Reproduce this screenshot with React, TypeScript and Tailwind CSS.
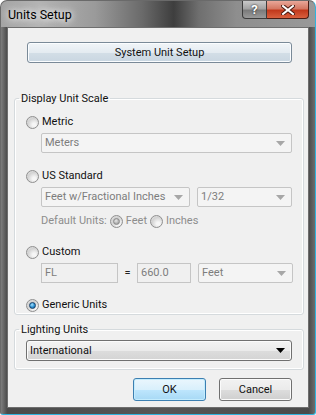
import React from "react";

function Radio({ checked, disabled }: { checked?: boolean; disabled?: boolean }) {
  return (
    <span className="flex h-[13px] w-[13px] shrink-0 items-center justify-center rounded-full border border-[#8f8f8f] bg-[radial-gradient(circle_at_65%_70%,#f6f6f6_15%,#d2d2d2_60%,#ebebeb)]">
      {checked && (
        <span
          className={
            disabled
              ? "h-[7px] w-[7px] rounded-full border border-[#8a8a8a] bg-[radial-gradient(circle_at_40%_35%,#e8e8e8,#a4a4a4_70%)]"
              : "h-[7px] w-[7px] rounded-full border border-[#17406a] bg-[radial-gradient(circle_at_40%_35%,#a6e2ff,#2a8fd0_55%,#0d4f86)]"
          }
        />
      )}
    </span>
  );
}

function Arrow({ dark }: { dark?: boolean }) {
  return (
    <svg width="9" height="5" viewBox="0 0 9 5" className="shrink-0">
      <path d="M0 0 H9 L4.5 5 Z" fill={dark ? "#000000" : "#a7a7a7"} />
    </svg>
  );
}

function Combo({ text, className }: { text: string; className: string }) {
  return (
    <div
      className={`flex h-[20px] items-center justify-between whitespace-nowrap rounded-[2px] border border-[#c5c5c5] bg-[#f4f4f4] pl-[3px] pr-[6px] text-[#7d7d7d] ${className}`}
    >
      <span>{text}</span>
      <Arrow />
    </div>
  );
}

function Field({ text, className }: { text: string; className: string }) {
  return (
    <div
      className={`flex h-[20px] items-center border border-[#c5c5c5] bg-[#f0f0f0] pl-[3px] text-[#7d7d7d] ${className}`}
    >
      {text}
    </div>
  );
}

export default function App() {
  return (
    <div className="h-[415px] w-[316px] bg-white font-['Roboto',sans-serif] text-[11px] leading-[14px] text-[#111111]">
      <div className="flex h-full w-full flex-col rounded-t-[7px] rounded-b-[3px] border border-[#6a6a6a] border-r-[#2fb4de] border-b-[#2fb4de] bg-[linear-gradient(to_right,#7d7d7d,#4a4a4a_2%,#565656_50%,#4a4a4a_98%,#6d6d6d)]">
        {/* title bar */}
        <div className="flex h-[26px] shrink-0 items-start justify-between rounded-t-[6px] bg-[linear-gradient(to_right,#a4a4a4,#b4b4b4_12%,#9a9a9a_30%,#6a6a6a_45%,#3e3e3e_55%,#6f6f6f_63%,#8e8e8e_75%,#999999)] pl-[7px] pr-[6px]">
          <span className="mt-[6px] text-[12.5px] leading-[16px] text-black [text-shadow:0_0_6px_#ffffff,0_0_10px_#ffffff]">
            Units Setup
          </span>
          <div className="flex">
            <div className="flex h-[18px] w-[25px] items-center justify-center rounded-bl-[4px] border border-t-0 border-[#3c3c3c] bg-[linear-gradient(to_bottom,#c9c9c9,#a3a3a3_45%,#7b7b7b_55%,#9a9a9a)] text-[13px] font-bold leading-[14px] text-white [text-shadow:0_0_2px_#000000]">
              ?
            </div>
            <div className="flex h-[18px] w-[42px] items-center justify-center rounded-br-[4px] border border-t-0 border-l-0 border-[#4a1d14] bg-[linear-gradient(to_bottom,#e9a799,#d47863_45%,#c2391c_55%,#d9603e)]">
              <svg width="14" height="10" viewBox="0 0 14 10">
                <path d="M2 1 L12 9 M12 1 L2 9" stroke="#4a1a10" strokeWidth="4" strokeLinecap="square" />
                <path d="M2 1 L12 9 M12 1 L2 9" stroke="#ffffff" strokeWidth="2" strokeLinecap="square" />
              </svg>
            </div>
          </div>
        </div>

        {/* client area */}
        <div className="mx-[6px] mb-[6px] flex flex-1 flex-col border border-[#6e6e6e] bg-[#f0f0f0]">
          <button className="ml-[19px] mt-[14px] h-[21px] w-[265px] rounded-[3px] border border-[#7a8a98] bg-[linear-gradient(to_bottom,#f1f5f8,#e4ebf1_50%,#d3dee7_51%,#c9d6e1)] text-[11px] text-[#111111] shadow-[inset_0_0_0_1px_#fbfdff]">
            System Unit Setup
          </button>

          <fieldset className="ml-[6px] mr-[4px] mt-[28px] rounded-[3px] border border-[#d5dadd] px-0 pb-[2px] shadow-[inset_0_0_0_1px_#ffffff]">
            <legend className="ml-[4px] h-[15px] px-[2px] leading-[15px]">Display Unit Scale</legend>

            <div className="ml-[11px] mt-[9px] flex h-[14px] items-center gap-[3px]">
              <Radio />
              <span>Metric</span>
            </div>
            <Combo text="Meters" className="ml-[26px] mt-[4px] w-[251px]" />

            <div className="ml-[11px] mt-[16px] flex h-[14px] items-center gap-[3px]">
              <Radio />
              <span>US Standard</span>
            </div>
            <div className="ml-[26px] mt-[4px] flex gap-[7px]">
              <Combo text="Feet w/Fractional Inches" className="w-[149px]" />
              <Combo text="1/32" className="w-[95px]" />
            </div>
            <div className="ml-[26px] mt-[7px] flex h-[14px] items-center text-[#8d8d8d]">
              <span>Default Units:</span>
              <span className="ml-[3px]">
                <Radio checked disabled />
              </span>
              <span className="ml-[3px]">Feet</span>
              <span className="ml-[3px]">
                <Radio />
              </span>
              <span className="ml-[3px]">Inches</span>
            </div>

            <div className="ml-[11px] mt-[17px] flex h-[14px] items-center gap-[3px]">
              <Radio />
              <span>Custom</span>
            </div>
            <div className="ml-[26px] mt-[4px] flex items-center">
              <Field text="FL" className="w-[77px]" />
              <span className="w-[19px] text-center text-[#222222]">=</span>
              <Field text="660.0" className="w-[54px]" />
              <Combo text="Feet" className="ml-[7px] w-[95px]" />
            </div>

            <div className="ml-[11px] mt-[15px] flex h-[14px] items-center gap-[3px]">
              <Radio checked />
              <span>Generic Units</span>
            </div>
          </fieldset>

          <fieldset className="ml-[6px] mr-[4px] mt-[7px] rounded-[3px] border border-[#d5dadd] px-0 pb-[8px] shadow-[inset_0_0_0_1px_#ffffff]">
            <legend className="ml-[4px] h-[15px] px-[2px] leading-[15px]">Lighting Units</legend>
            <div className="ml-[11px] mt-[3px] flex h-[21px] w-[266px] items-center justify-between rounded-[3px] border border-[#707070] bg-[linear-gradient(to_bottom,#f3f3f3,#ebebeb_50%,#dddddd_51%,#d4d4d4)] pl-[3px] pr-[6px] shadow-[inset_0_0_0_1px_#fbfbfb]">
              <span>International</span>
              <Arrow dark />
            </div>
          </fieldset>

          <div className="mr-[16px] mt-[8px] flex justify-end gap-[13px]">
            <button className="h-[23px] w-[73px] rounded-[3px] border border-[#3c7fb1] bg-[linear-gradient(to_bottom,#eaf6fd,#d9f0fc_50%,#bee6fd_51%,#a7d9f5)] text-[11px] text-[#111111] shadow-[inset_0_0_0_1px_#c4ecfd]">
              OK
            </button>
            <button className="h-[23px] w-[73px] rounded-[3px] border border-[#707070] bg-[linear-gradient(to_bottom,#f2f2f2,#ebebeb_50%,#dddddd_51%,#cfcfcf)] text-[11px] text-[#111111] shadow-[inset_0_0_0_1px_#fbfbfb]">
              Cancel
            </button>
          </div>
        </div>
      </div>
    </div>
  );
}
